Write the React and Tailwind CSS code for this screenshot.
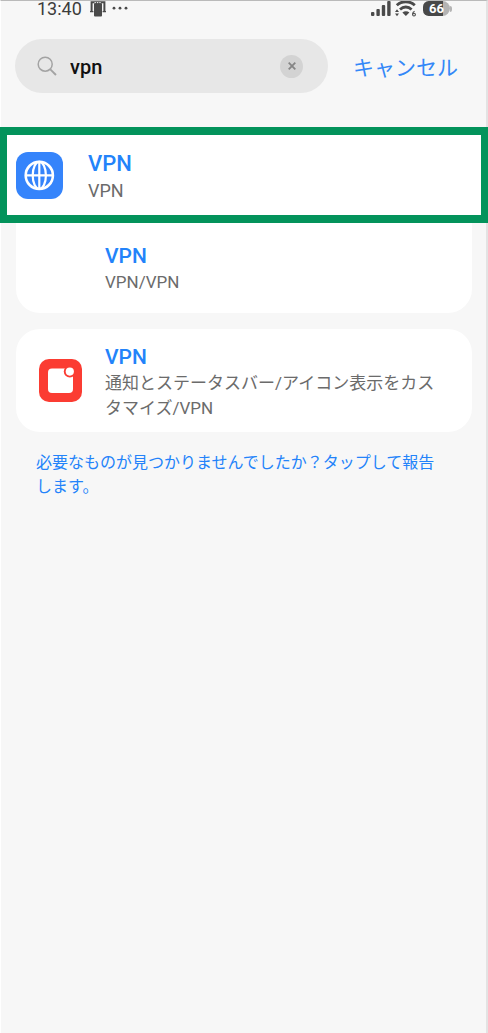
import React, { useState } from 'react';

// --- Status bar icons ---
const CastIcon = () => (
  <svg className="w-4 h-4" viewBox="0 0 16 16" fill="none" aria-hidden="true">
    <path d="M1.6 10V1.2h12.8V10" stroke="#4a4a4a" strokeWidth="2" />
    <path d="M0 10.6h3.4M12.6 10.6H16" stroke="#4a4a4a" strokeWidth="1.4" />
    <rect x="4" y="2" width="8" height="13.5" rx="1" fill="#4a4a4a" />
    <path d="M4.5 1.6h7" stroke="#f7f7f7" strokeWidth="1" strokeDasharray="1.4 1" />
  </svg>
);

const SignalIcon = () => (
  <svg className="w-5 h-4" viewBox="0 0 20 16" fill="#4a4a4a" aria-hidden="true">
    <rect x="0" y="11" width="3.4" height="4" rx="1" />
    <rect x="5.4" y="8" width="3.4" height="7" rx="1" />
    <rect x="10.8" y="4" width="3.4" height="11" rx="1" />
    <rect x="16.2" y="0" width="3.4" height="15" rx="1" />
  </svg>
);

const WifiIcon = () => (
  <svg className="w-[22px] h-4" viewBox="0 0 22 16" fill="none" aria-hidden="true">
    <path d="M1.8 4.2C6.5-.4 15-.4 19.8 4.2" stroke="#4a4a4a" strokeWidth="2.8" />
    <path d="M5 8.4C8.4 5.2 13.2 5.2 16.6 8.4" stroke="#4a4a4a" strokeWidth="2.8" />
    <path d="M7.4 11.4c2-1.7 5-1.7 7 0L10.9 15z" fill="#4a4a4a" />
    <path d="M0 11l2-2.8L4 11zM0 12.4h4L2 15.2z" fill="#4a4a4a" />
    <circle cx="19" cy="13.6" r="1.4" stroke="#4a4a4a" strokeWidth="1.1" />
    <path d="M17.6 13.4c0-1.6.6-2.8 2-3.2" stroke="#4a4a4a" strokeWidth="1.1" />
  </svg>
);

// --- Result icons ---
const GlobeIcon = () => (
  <svg className="w-[47px] h-[47px] shrink-0" viewBox="0 0 47 47" fill="none" aria-hidden="true">
    <rect width="47" height="47" rx="12" fill="#3584fb" />
    <g stroke="#fff" strokeWidth="2.2">
      <circle cx="23.3" cy="23.4" r="13.6" strokeWidth="2.6" />
      <ellipse cx="23.3" cy="23.4" rx="6.6" ry="13.6" />
      <path d="M23.3 9.8v27.2M9.7 23.4h27.2" />
    </g>
  </svg>
);

const NotificationIcon = () => (
  <svg className="w-[43px] h-[43px]" viewBox="0 0 43 43" aria-hidden="true">
    <rect width="43" height="43" rx="10" fill="#fb3c32" />
    <rect x="9" y="9.5" width="25" height="24.5" rx="4" fill="#fff" />
    <circle cx="30.8" cy="12.6" r="6" fill="#fb3c32" />
    <circle cx="30.8" cy="12.6" r="4.1" fill="#fff" />
  </svg>
);

const results = [
  { id: 'vpn-sub', path: 'VPN/VPN', icon: null },
  { id: 'vpn-status', path: '通知とステータスバー/アイコン表示をカスタマイズ/VPN', icon: <NotificationIcon /> },
];

function StatusBar() {
  return (
    <div className="flex items-start justify-between h-[18px] pl-9 pr-[34px] text-[#4a4a4a]">
      <div className="flex items-start">
        <span className="text-lg leading-4 text-[#3c3c3c]">13:40</span>
        <span className="ml-2"><CastIcon /></span>
        <svg className="ml-1.5 w-4 h-4" viewBox="0 0 16 16" fill="#4a4a4a" aria-hidden="true">
          <circle cx="2" cy="7.2" r="1.4" />
          <circle cx="8" cy="7.2" r="1.4" />
          <circle cx="14" cy="7.2" r="1.4" />
        </svg>
      </div>
      <div className="flex items-start">
        <SignalIcon />
        <span className="ml-1"><WifiIcon /></span>
        <span className="ml-1.5 flex items-center">
          <span className="flex items-center justify-center w-[27px] h-[15px] rounded-l-md rounded-r-lg bg-linear-to-r from-[#484848] from-75% to-[#b4b4b4] to-75% text-white text-[13px] leading-4 font-bold">66</span>
          <span className="w-0.5 h-1.5 rounded-r-sm bg-[#b4b4b4]" />
        </span>
      </div>
    </div>
  );
}

function SearchBar() {
  const [query, setQuery] = useState('vpn');

  return (
    <div className="flex items-center mt-5 pl-3.5 pr-7">
      <div className="flex flex-1 min-w-0 items-center h-[54px] pl-[22px] pr-[25px] rounded-full bg-[#e7e7e7]">
        <svg className="w-5 h-5 shrink-0" viewBox="0 0 20 20" fill="none" stroke="#a3a3a3" strokeWidth="1.5" aria-hidden="true">
          <circle cx="8.2" cy="8.2" r="7" />
          <path d="M13.3 13.3l5.7 5.7" strokeWidth="1.9" />
        </svg>
        <input
          type="text"
          aria-label="検索"
          value={query}
          onChange={(e) => setQuery(e.target.value)}
          className="flex-1 min-w-0 ml-3 pt-0.5 pl-px bg-transparent text-xl font-medium text-[#111] outline-none"
        />
        <button type="button" aria-label="クリア" onClick={() => setQuery('')} className="flex items-center justify-center w-[23px] h-[23px] rounded-full bg-[#d3d3d3]">
          <svg className="w-2 h-2" viewBox="0 0 8 8" stroke="#858585" strokeWidth="1.8" aria-hidden="true">
            <path d="M.7.7l6.6 6.6M7.3.7L.7 7.3" />
          </svg>
        </button>
      </div>
      <button type="button" className="ml-[25px] pt-1 text-[21px] leading-8 text-[#3387f8] whitespace-nowrap">キャンセル</button>
    </div>
  );
}

function ResultText({ path }) {
  return (
    <>
      <div className="text-[21px] leading-6 font-medium text-[#2383fa]">VPN</div>
      <div className="mt-0.5 text-[17px] leading-[25px] text-[#6b6b6b]">{path}</div>
    </>
  );
}

function App() {
  return (
    <div className="min-h-screen border-t border-r-2 border-l border-t-[#bababa] border-r-[#e3e3e3] border-l-white bg-[#f7f7f7] font-['Roboto','Noto_Sans_CJK_JP',sans-serif]">
      <StatusBar />
      <SearchBar />

      <main className="mt-[34px]">
        {/* Highlighted result, full width */}
        <a href="#vpn" className="relative -ml-px -mr-0.5 flex items-center h-24 pl-[9px] border-x-7 border-y-8 border-[#03935b] bg-white">
          <GlobeIcon />
          <div className="ml-[25px] pt-0.5">
            <div className="text-[22px] leading-7 font-medium text-[#2383fa]">VPN</div>
            <div className="text-lg leading-[25px] text-[#6b6b6b]">VPN</div>
          </div>
        </a>

        <div className="ml-[15px] mr-3.5">
          <a href={`#${results[0].id}`} className="block h-[90px] pt-[21px] pl-[89px] pr-7 rounded-b-3xl bg-white">
            <ResultText path={results[0].path} />
          </a>

          <a href={`#${results[1].id}`} className="flex items-center mt-4 pr-7 rounded-3xl bg-white">
            <div className="flex justify-center w-[89px] shrink-0">{results[1].icon}</div>
            <div className="min-w-0 pt-4 pb-[11px]">
              <ResultText path={results[1].path} />
            </div>
          </a>
        </div>

        <a href="#report" className="block mt-[19px] ml-[35px] mr-11 text-base leading-6 text-[#2383fa]">
          必要なものが見つかりませんでしたか？タップして報告します。
        </a>
      </main>
    </div>
  );
}

export default App;
